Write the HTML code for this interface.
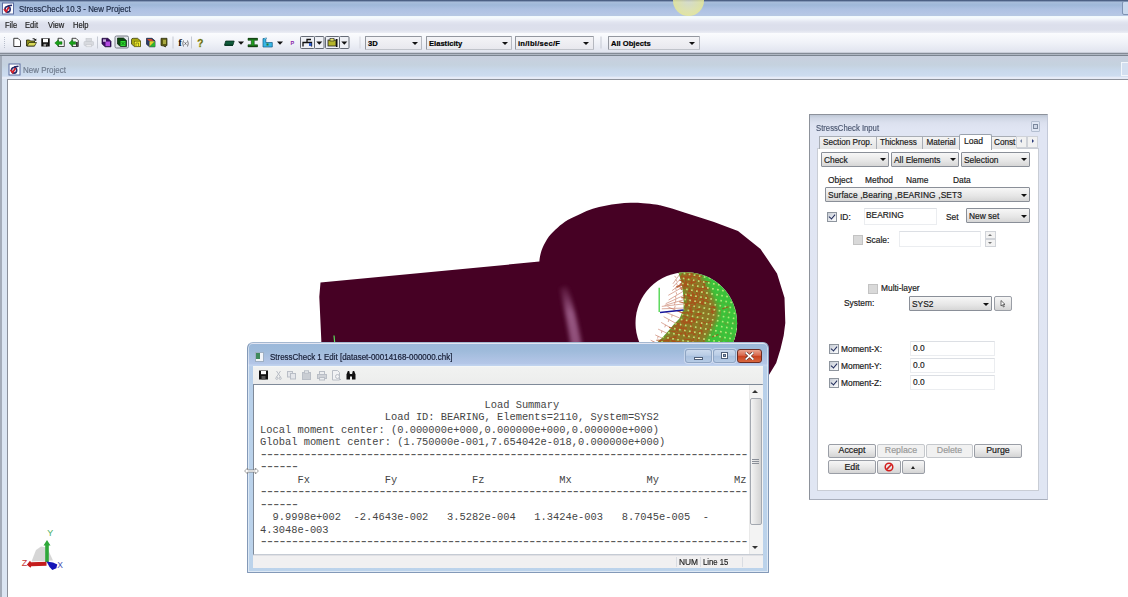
<!DOCTYPE html>
<html><head><meta charset="utf-8"><title>StressCheck 10.3 - New Project</title>
<style>
*{box-sizing:border-box;margin:0;padding:0}
html,body{width:1128px;height:597px;overflow:hidden;background:#fff}
body{position:relative;font-family:"Liberation Sans",sans-serif;font-size:8.4px;color:#1a1a1a}
.a{position:absolute}
.t{position:absolute;white-space:nowrap;line-height:10px}
.t,.cmb span,.tab span{-webkit-text-stroke:.18px}
/* main frame */
#titlebar{left:0;top:0;width:1128px;height:16px;background:linear-gradient(#3d4f72 0,#5d7297 1px,#a9bedb 2px,#9fb8d9 5px,#adc1e2 9px,#b3c5e5 13px,#b7c9e3 16px)}
#menubar{left:0;top:16px;width:1128px;height:17px;background:linear-gradient(#eef6fc 0,#f5fcfe 1px,#f1f5fb 3px,#e2e5f0 6px,#dcdfec 9px,#dde0ec 14px,#eceef5 17px)}
#toolbar{left:0;top:33px;width:1128px;height:19px;background:linear-gradient(#fbfcfe,#f0f2f8 50%,#e1e4ef)}
#mdiback{left:0;top:52px;width:1128px;height:545px;background:linear-gradient(#c8ccd8 0,#c8ccd8 1px,#848b96 1px,#848b96 2px,#b0b7c3 2px,#b0b7c3 3px,#7a838f 3px,#7a838f 4px,#a4acb9 4px)}
#mdiframe{left:2px;top:56px;width:1126px;height:541px;background:linear-gradient(#c8cfde 0,#c5d2df 9px,#c9d9ec 15px,#cddcf0 20px,#e6ebf7 21.500px,#e6ebf7 23px,#dbe5f2 23px)}
#mdicontent{left:7px;top:79px;width:1121px;height:518px;background:#fff;border-top:1px solid #8e929c;border-left:1px solid #8a8f99}
.cmb{position:absolute;border:1px solid #8a8f98;border-radius:1px;background:linear-gradient(#f7f7f7,#e6e6e6 60%,#d6d6d6);white-space:nowrap}
.cmb span{position:absolute;left:2px;top:1.500px;line-height:10px}
.cmb i{position:absolute;right:2.500px;top:50%;margin-top:-1px;width:0;height:0;border-left:3px solid transparent;border-right:3px solid transparent;border-top:3px solid #111}
.tb{font-weight:bold;font-size:7.6px;color:#000}
.cmb.tb i{right:3.500px}
.btn{font-size:8.8px;-webkit-text-stroke:.2px;position:absolute;border:1px solid #9a9ea6;border-radius:2px;background:linear-gradient(#f6f6f6,#e8e8e8 50%,#d4d4d4);text-align:center;line-height:11px}
.btn.dis{color:#9a9a9a;border-color:#c5c8cc;background:#f1f1f1}
.chk{position:absolute;width:10px;height:10px;border:1px solid #8e959e;background:linear-gradient(135deg,#c6ccd5,#f6f7f9 85%)}
.chk.dis{background:#d9d9d9;border-color:#c3c3c3}
.chk.on:after{content:"";position:absolute;left:2px;top:0px;width:3px;height:5px;border:solid #1f2a5a;border-width:0 1.7px 1.7px 0;transform:rotate(40deg)}
.inp{position:absolute;border:1px solid #ebedf0;border-top-color:#dcdfe4;background:#fff}
.mn{font-size:8.4px;color:#222;transform:scaleX(.9);transform-origin:0 0}
.sg{transform:scaleX(.93);transform-origin:0 0}
.tab{top:136px;height:13px;background:linear-gradient(#f4f4f4,#e4e4e4);border:1px solid #a8adb5;border-bottom:none}
.tab span{position:absolute;left:3px;top:1px;line-height:10px;white-space:nowrap;font-size:8.2px}
pre{font-family:"Liberation Mono",monospace}
.ml{position:absolute;left:260px;font-size:10.4px;line-height:12.42px;color:#454545;white-space:pre}
.ml.d{left:259.300px;font-size:15px;letter-spacing:-2.76px;color:#5a5a5a}
</style></head><body>

<div id="titlebar" class="a"></div>
<div id="menubar" class="a"></div>
<div id="toolbar" class="a"></div>
<div id="mdiback" class="a"></div>
<div id="mdiframe" class="a"></div>
<div id="mdicontent" class="a"></div>

<!-- title text -->
<div class="t" style="left:19px;top:4px;font-size:8.4px;color:#1c2a44;transform:scaleX(.94);transform-origin:0 0">StressCheck 10.3 - New Project</div>
<div class="t mn" style="left:4.5px;top:20px">File</div>
<div class="t mn" style="left:25px;top:20px">Edit</div>
<div class="t mn" style="left:48px;top:20px">View</div>
<div class="t mn" style="left:73px;top:20px">Help</div>
<div class="t" style="left:23.4px;top:65px;font-size:8.3px;color:#707c8e;transform:scaleX(.96);transform-origin:0 0">New Project</div>

<div class="a" style="left:673px;top:-15px;width:31px;height:31px;border-radius:50%;background:radial-gradient(circle,rgba(228,230,205,.75) 0,rgba(232,233,150,.85) 70%,rgba(236,236,120,.8) 88%,rgba(236,236,120,0) 100%)"></div>
<div class="a" style="left:1122px;top:1px;width:8px;height:14px;border:1px solid #7e93b3;border-radius:2px;background:#c9d9ee"></div>
<div class="a" style="left:1121px;top:62px;width:8px;height:14px;border:1px solid #f2f6fb;background:#d3dff0"></div>
<!--ICONS-->
<!--TOOLBAR-->
<!-- toolbar + app icons -->
<svg class="a" style="left:0;top:0" width="720" height="80" viewBox="0 0 720 80">
<defs>
</defs>
<g transform="translate(2 2.500)"><rect x="0.500" y="0.500" width="11" height="11" fill="#fdfdff" stroke="#5b6da0" stroke-width="1"/><ellipse cx="5.600" cy="6.800" rx="2.600" ry="2.800" fill="none" stroke="#222a6a" stroke-width="1.600"/><path d="M5.500 3.600 L10 2.800" stroke="#222a6a" stroke-width="1.500"/><path d="M2 6.500 L4.200 9 L7 4.500" stroke="#d31e2a" stroke-width="1.700" fill="none"/></g>
<g transform="translate(8.500 63.500)"><rect x="0.500" y="0.500" width="11" height="11" fill="#fdfdff" stroke="#5b6da0" stroke-width="1"/><ellipse cx="5.600" cy="6.800" rx="2.600" ry="2.800" fill="none" stroke="#222a6a" stroke-width="1.600"/><path d="M5.500 3.600 L10 2.800" stroke="#222a6a" stroke-width="1.500"/><path d="M2 6.500 L4.200 9 L7 4.500" stroke="#d31e2a" stroke-width="1.700" fill="none"/></g>
<!-- grip -->
<g fill="#b9bfcc"><rect x="4" y="37" width="1" height="1"/><rect x="4" y="39" width="1" height="1"/><rect x="4" y="41" width="1" height="1"/><rect x="4" y="43" width="1" height="1"/><rect x="4" y="45" width="1" height="1"/><rect x="4" y="47" width="1" height="1"/></g>
<!-- new -->
<path d="M13.800 38.300 h4.200 l2.500 2.500 v5.700 h-6.700 z" fill="#fff" stroke="#222" stroke-width="0.900"/>
<!-- open -->
<path d="M26.500 46 v-6 h3 l1 1 h4 v5 z" fill="#8e8f1e" stroke="#1f2208" stroke-width="0.800"/><path d="M27 46 l2 -3.500 h7.500 l-2 3.500 z" fill="#d9da5a" stroke="#1f2208" stroke-width="0.700"/><path d="M32 39 q2 -1.500 3.500 0.300 l0.800 -0.800 v2.300 h-2.300 l0.800 -0.800 q-1 -1 -2.800 -1 z" fill="#111"/>
<!-- save -->
<rect x="41.300" y="38.300" width="8.400" height="8.200" fill="#0c0c0c"/><rect x="43" y="38.800" width="5" height="3.500" fill="#fff"/><rect x="43.500" y="43.800" width="3.800" height="2.700" fill="#9a9a9a"/><rect x="46" y="44.300" width="1.300" height="2.200" fill="#111"/>
<!-- import -->
<path d="M58 38.300 h4 l2.300 2.300 v5.900 h-6.300 z" fill="#f4f4f4" stroke="#222" stroke-width="0.800"/><path d="M54.800 43 l3.700 -3.300 v2 h3.500 v2.600 h-3.500 v2 z" fill="#18a318" stroke="#0b5e0b" stroke-width="0.500"/>
<!-- export -->
<path d="M72 38.300 h4 l2.300 2.300 v5.900 h-6.300 z" fill="#f4f4f4" stroke="#222" stroke-width="0.800"/><path d="M69 43 l3.700 -3.300 v2 h3 v2.600 h-3 v2 z" fill="#18a318" stroke="#0b5e0b" stroke-width="0.500"/><rect x="76" y="42" width="1.800" height="4.500" fill="#333"/>
<!-- print disabled -->
<g fill="#d7d9de" stroke="#c3c6cc" stroke-width="0.600"><rect x="84" y="41.500" width="9.500" height="4" rx="0.800"/><rect x="86" y="38.500" width="5.500" height="3"/><rect x="86" y="44.500" width="5.500" height="2.300" fill="#ececef"/></g>
<rect x="97" y="36.500" width="1" height="12" fill="#c5c9d3"/>
<!-- purple -->
<path d="M102 38.300 h6 l3 3 v5.500 h-6 l-3 -3 z" fill="#3b0f63" stroke="#1a0633" stroke-width="0.700"/><rect x="105.500" y="41.500" width="4.500" height="4.500" fill="#b24be0"/><rect x="103" y="39.300" width="3" height="2.500" fill="#e7d3f5" opacity="0.800"/>
<!-- green pressed -->
<rect x="115" y="36" width="13.500" height="12" rx="1.500" fill="#e3e6ec" stroke="#6b717c" stroke-width="0.900"/>
<path d="M117.500 38 h6 l3 2.500 v6 h-6 l-3 -2.500 z" fill="#0d4a10" stroke="#062208" stroke-width="0.700"/><rect x="120.500" y="41" width="5" height="5" fill="#2edc2e"/><path d="M121.500 42 l3 3 m0 -3 l-3 3" stroke="#0d6a10" stroke-width="0.800"/>
<!-- yellow -->
<path d="M131.500 39.500 q0 -1.200 2 -1.200 h4 l3 2.500 v5.800 h-6 l-3 -2.500 z" fill="#a8a812" stroke="#2b2b05" stroke-width="0.700"/><rect x="134.300" y="41.200" width="6" height="5.300" fill="#f2ee2a" stroke="#55550a" stroke-width="0.500"/><path d="M136 46 v-3 h2.500 v3" fill="none" stroke="#55550a" stroke-width="0.600"/>
<!-- multi -->
<path d="M146.500 38.300 h5.500 l3 2.500 v6 h-5.500 l-3 -2.500 z" fill="#2a3a6a" stroke="#141b33" stroke-width="0.700"/><path d="M149.500 46.800 v-5.500 h5.500 z" fill="#e3d62a"/><path d="M149.500 46.800 h5.500 v-5.500 z" fill="#2fb52f"/><path d="M147 39 h4.500 l2 2 h-4.500 z" fill="#d44a2a"/>
<!-- olive -->
<path d="M161 38.300 h6 v7.200 l-1.500 0.300 v1.200 l-2 -1 l-2.500 -0.500 z" fill="#5e5e16" stroke="#26260a" stroke-width="0.700"/><rect x="163" y="39.800" width="3" height="4.200" fill="#a9a940"/>
<rect x="172.500" y="36.500" width="1" height="12" fill="#c5c9d3"/>
<!-- f(x) -->
<text x="178.300" y="46.300" font-family="Liberation Serif, serif" font-size="11" font-weight="bold" fill="#111">f</text><path d="M183.500 40.500 q-1.500 3 0 6 M187.500 40.500 q1.500 3 0 6" fill="none" stroke="#444" stroke-width="0.700"/><path d="M184.500 42.200 l2 2.600 m0 -2.600 l-2 2.600" stroke="#444" stroke-width="0.600"/>
<rect x="191" y="36.500" width="1" height="12" fill="#c5c9d3"/>
<!-- ? key -->
<text x="197.200" y="46.600" font-family="Liberation Sans, sans-serif" font-size="10" font-weight="bold" fill="#34380c" stroke="#b9b930" stroke-width="0.450">?</text>
<!-- green block -->
<path d="M224.500 45 l1.200 -4 h8.500 l-1.200 4 z" fill="#0f5a3a" stroke="#052a1a" stroke-width="0.700"/><path d="M224.500 45 h8.500 v1 h-8.500 z" fill="#083a25"/>
<g transform="translate(238 41.500)"><path d="M0 0 L6 0 L3 3.200 Z" fill="#111"/></g>
<!-- I beam -->
<path d="M248 38.300 h9.500 v2 h-3.300 v4.500 h3.300 v2 h-9.500 v-2 h3.300 v-4.500 h-3.300 z" fill="#1fa01f" stroke="#0b3a0b" stroke-width="0.600"/><rect x="248" y="38.200" width="9.500" height="1.300" fill="#123a12"/><rect x="248" y="45.600" width="9.500" height="1.300" fill="#123a12"/>
<!-- blue L -->
<path d="M263 47 v-8.500 h2.800 v4 h6.500 v4.500 z" fill="#39b7e6" stroke="#0e5a86" stroke-width="0.700"/><path d="M263.500 39 l1.500 -1 h2 l-1.200 1" fill="#8fe0ff" stroke="#0e5a86" stroke-width="0.400"/><rect x="266.500" y="43.500" width="2" height="2" fill="#2a7a2a"/>
<g transform="translate(277 41.500)"><path d="M0 0 L6 0 L3 3.200 Z" fill="#111"/></g>
<!-- P -->
<text x="290.600" y="45" font-family="Liberation Sans, sans-serif" font-size="5.500" font-weight="bold" fill="#8a1fa8">P</text>
<!-- boxed 1 -->
<rect x="300.500" y="36.500" width="14" height="12" rx="1" fill="#eef0f5" stroke="#555b66" stroke-width="0.900"/><rect x="314.500" y="36.500" width="9.500" height="12" rx="1" fill="#eef0f5" stroke="#555b66" stroke-width="0.900"/>
<path d="M303 46.500 v-4 h8.500 v4 M307 42.500 v-3 h4" fill="none" stroke="#111" stroke-width="1.300"/><rect x="309" y="43" width="2.500" height="3" fill="#2f5fd0"/>
<g transform="translate(316.300 41.500)"><path d="M0 0 L6 0 L3 3.200 Z" fill="#111"/></g>
<!-- boxed 2 -->
<rect x="325.500" y="36.500" width="14" height="12" rx="1" fill="#eef0f5" stroke="#555b66" stroke-width="0.900"/><rect x="339.500" y="36.500" width="9.500" height="12" rx="1" fill="#eef0f5" stroke="#555b66" stroke-width="0.900"/>
<rect x="328" y="40" width="8" height="6" fill="#b5b52a" stroke="#222" stroke-width="0.800"/><rect x="330" y="38.500" width="4" height="2.500" fill="#e8e86a" stroke="#222" stroke-width="0.600"/><rect x="336" y="39" width="1.500" height="8" fill="#111"/>
<g transform="translate(341.300 41.500)"><path d="M0 0 L6 0 L3 3.200 Z" fill="#111"/></g>
<rect x="359.500" y="36.500" width="1" height="12" fill="#d3d6de"/>
<rect x="600.500" y="36.500" width="1" height="12" fill="#c5c9d3"/>
</svg>
<div class="cmb tb" style="left:365px;top:36px;width:57px;height:13.5px;background:linear-gradient(#f4f4f7,#e8e8ee);border-color:#93979f #b5b8c0 #c0c3ca #93979f"><span>3D</span><i></i></div>
<div class="cmb tb" style="left:426px;top:36px;width:86px;height:13.5px;background:linear-gradient(#f4f4f7,#e8e8ee);border-color:#93979f #b5b8c0 #c0c3ca #93979f"><span>Elasticity</span><i></i></div>
<div class="cmb tb" style="left:515px;top:36px;width:78.5px;height:13.5px;background:linear-gradient(#f4f4f7,#e8e8ee);border-color:#93979f #b5b8c0 #c0c3ca #93979f"><span style="letter-spacing:.25px">in/lbl/sec/F</span><i></i></div>
<div class="cmb tb" style="left:608px;top:36px;width:91.5px;height:13.5px;background:linear-gradient(#f4f4f7,#e8e8ee);border-color:#93979f #b5b8c0 #c0c3ca #93979f"><span>All Objects</span><i></i></div>
<!--/TOOLBAR-->
<!--MODEL-->
<!-- 3D model -->
<svg class="a" style="left:0;top:80px" width="1128" height="517" viewBox="0 80 1128 517">
<defs>
<linearGradient id="hl" x1="0" y1="0" x2="1" y2="0"><stop offset="0" stop-color="#4a0630" stop-opacity="0"/><stop offset="0.5" stop-color="#946080" stop-opacity="1"/><stop offset="1" stop-color="#4a0630" stop-opacity="0"/></linearGradient>
<linearGradient id="hlv" x1="0" y1="0" x2="0" y2="1"><stop offset="0" stop-color="#a0608c" stop-opacity="0.15"/><stop offset="0.45" stop-color="#a0608c" stop-opacity="1"/><stop offset="1" stop-color="#a0608c" stop-opacity="0.9"/></linearGradient>
<clipPath id="holeclip"><circle cx="686.300" cy="323" r="50.800"/></clipPath>
<filter id="b2" x="-20%" y="-20%" width="140%" height="140%"><feGaussianBlur stdDeviation="2"/></filter>
<filter id="b1" x="-50%" y="-20%" width="200%" height="140%"><feGaussianBlur stdDeviation="2.300"/></filter>
<pattern id="dots" x="0" y="0" width="5.100" height="5.100" patternUnits="userSpaceOnUse" patternTransform="rotate(10)"><circle cx="2.500" cy="2.500" r="0.900" fill="#c9f283"/></pattern>
</defs>
<path d="M320.500 282.500 L539.400 261.600 C539.5 260.8 539.5 258.9 540.0 256.6 C540.5 254.3 541.1 251.2 542.6 247.8 C544.1 244.5 546.4 239.8 548.9 236.5 C551.4 233.2 554.5 230.4 557.6 227.7 C560.7 225.0 563.9 222.4 567.7 220.1 C571.5 217.8 576.1 215.8 580.3 213.9 C584.5 212.0 588.6 210.2 592.8 208.8 C597.0 207.4 601.2 206.5 605.4 205.7 C609.6 204.9 613.8 204.3 618.0 203.8 C622.2 203.3 626.3 202.9 630.5 202.8 C634.7 202.7 638.9 202.9 643.1 203.2 C647.3 203.5 652.9 204.1 655.7 204.4 C658.5 204.8 659.3 205.2 660.0 205.3 L672.0 208.5 L685.0 212.8 L700.0 217.5 L714.0 222.0 L738.0 231.0 L760.5 249.0 L768.0 260.0 L777.0 273.6 L784.5 297.7 L785.3 323.0 L783.7 335.4 L780.5 349.0 L776.2 363.0 L768.6 375.5 L768 400 L321.800 400 L321.300 340 L319.300 296.800 Z" fill="#460124"/>
<path d="M560 288 Q565 310 571 346 L582 346 Q575 308 567 286 Z" fill="url(#hlv)" filter="url(#b1)" opacity="0.9"/>
<!-- hole -->
<circle cx="686.3" cy="323.0" r="50.8" fill="#fff"/>
<g clip-path="url(#holeclip)">
<path d="M678.2 272.0 L681.6 282.4 L682.9 291.8 L683.8 302.0 L683.6 309.2 L679.6 318.6 L674.2 324.0 L668.8 330.6 L662.0 338.0 L656.8 342.7 L650.0 349.0 L760 349 L760 262 L678 262 Z" fill="#3cc23a"/>
<clipPath id="greenclip"><path d="M678.2 272.0 L681.6 282.4 L682.9 291.8 L683.8 302.0 L683.6 309.2 L679.6 318.6 L674.2 324.0 L668.8 330.6 L662.0 338.0 L656.8 342.7 L650.0 349.0 L760 349 L760 262 L678 262 Z"/></clipPath>
<g clip-path="url(#greenclip)"><path d="M678.2 272.0 L681.6 282.4 L682.9 291.8 L683.8 302.0 L683.6 309.2 L679.6 318.6 L674.2 324.0 L668.8 330.6 L662.0 338.0 L656.8 342.7 L650.0 349.0 L700.0 349.0 L704.3 342.7 L707.7 338.0 L711.6 330.6 L714.5 324.0 L717.8 318.6 L718.1 309.2 L715.5 302.0 L710.6 291.8 L705.7 282.4 L698.2 272.0 Z" fill="#b4561e" opacity="0.68" filter="url(#b2)"/></g>
<path d="M687.4 296.3 l6.0 -2.8 M683.9 288.1 l-3.1 1.6 M702.8 288.7 l5.2 0.4 M689.6 282.0 l5.3 0.4 M689.8 319.9 l-4.8 1.7 M692.3 330.3 l3.3 -0.5 M691.7 294.5 l-4.2 2.1 M675.0 328.8 l-6.0 -1.4 M675.2 333.4 l6.8 -0.0 M690.7 307.6 l-0.6 4.1 M689.5 300.9 l3.9 -0.1 M696.9 293.6 l0.4 5.2 M703.3 338.3 l1.3 6.7 M683.9 283.3 l0.4 4.1 M693.1 282.9 l-5.3 -1.8 M692.6 327.5 l-0.8 4.5 M685.4 279.8 l2.5 4.8 M691.3 279.7 l4.9 2.4 M685.5 283.1 l2.8 4.1 M687.5 295.4 l-3.1 -0.5 M666.1 343.3 l-6.5 0.1 M680.5 324.2 l-4.3 0.0 M709.6 288.7 l-6.0 -1.7 M695.0 287.0 l5.1 2.7 M681.0 343.7 l3.0 1.6 M692.1 307.3 l-3.8 2.2 M690.0 320.2 l4.7 -0.5 M682.5 319.7 l5.8 1.3 M683.2 284.8 l-6.4 2.7 M687.9 321.3 l-3.1 -1.4 M678.0 328.2 l4.0 -1.3 M690.9 290.0 l3.7 5.5 M701.1 321.7 l4.8 1.6 M682.7 273.4 l-1.9 5.1 M682.5 281.0 l-3.1 -0.8 M682.5 286.3 l4.8 -0.2 M694.5 317.9 l0.7 5.0 M699.1 290.6 l5.8 2.6 M683.6 282.3 l-3.8 1.9 M703.6 281.2 l6.8 1.0 M699.1 288.5 l5.8 -0.1 M665.8 346.6 l3.1 4.2 M684.1 305.0 l6.8 0.9 M682.6 279.9 l2.4 5.9 M700.2 322.7 l0.2 3.4 M690.0 276.3 l-1.7 2.9 M667.0 336.2 l1.6 5.2 M697.8 275.2 l2.2 5.1 M687.6 311.8 l1.2 2.9 M691.9 273.4 l-6.2 0.6 M701.4 304.4 l4.3 -0.5 M692.9 334.4 l3.0 -0.3 M702.3 318.9 l-5.6 0.9 M686.8 293.1 l2.3 3.8 M700.3 296.7 l2.7 -1.3 M694.9 300.6 l0.4 6.3 M691.0 282.8 l-5.8 2.8 M705.0 283.6 l-1.1 3.4 M680.1 326.3 l-5.8 -0.5 M715.2 309.9 l-4.6 2.7 M690.5 339.0 l4.5 5.1 M687.9 300.2 l0.1 3.0 M692.0 331.8 l-4.4 2.2 M684.7 332.7 l2.2 4.5 M697.8 300.7 l5.2 1.4 M701.8 296.9 l2.2 3.4 M701.2 322.4 l0.3 6.1 M667.7 346.5 l5.7 -2.5 M665.9 344.6 l-3.2 1.1 M677.5 328.1 l5.8 0.6 M700.6 289.4 l3.2 3.3 M682.9 326.5 l1.9 6.1 M702.7 281.0 l1.6 4.3 M666.8 337.2 l6.1 1.6 M696.5 293.4 l0.3 6.1 M684.7 304.1 l5.8 -0.6 M690.8 275.7 l6.4 1.7 M686.0 313.3 l-4.0 -0.8 M686.5 321.2 l5.0 -0.5 M683.6 332.9 l-3.7 0.4 M683.1 278.8 l5.8 -1.5 M694.1 303.0 l1.6 5.1 M700.1 299.0 l4.3 1.3 M687.2 320.4 l-3.2 4.9 M678.9 339.2 l-6.0 -2.4 M658.7 344.9 l-5.7 -0.8 M677.7 335.5 l-6.1 2.7 M682.3 320.4 l3.3 -0.8 M695.3 294.5 l-3.6 2.2 M712.6 306.6 l2.9 1.2 M690.2 302.9 l3.8 -1.2 M693.6 322.1 l-4.6 0.6 M685.1 272.5 l3.6 -1.6 M693.7 288.6 l4.4 2.2 M661.7 340.3 l-3.1 1.8 M680.3 275.9 l6.2 2.6 M689.9 296.7 l4.2 4.8 M661.1 345.9 l4.8 -2.1 M686.5 328.9 l-4.4 2.1 M696.4 300.0 l-1.9 3.5 M689.0 318.9 l6.0 -0.2 M668.6 339.4 l-5.5 1.6 M671.8 341.3 l3.1 0.3 M698.3 289.5 l1.4 6.1 M684.6 282.0 l4.9 2.3 M689.2 296.6 l3.8 1.1 M680.4 276.9 l4.0 -0.7 M681.9 278.3 l0.7 4.8 M669.6 338.8 l-1.2 4.0 M694.9 314.5 l3.9 -1.2 M662.5 340.1 l-6.2 0.1 M690.9 321.0 l-1.2 2.9 M684.6 294.0 l-0.2 5.0 M697.9 285.3 l-5.5 -0.5 M686.3 288.3 l-6.6 -0.4 M690.1 333.1 l6.1 -0.8 M682.7 313.1 l5.6 -0.6 M694.5 301.8 l-4.6 2.5 M697.8 298.8 l-4.3 1.6 M665.2 342.6 l2.9 3.9 M682.1 284.2 l-6.0 2.9 M675.8 327.3 l2.5 4.3 M685.9 332.4 l-2.2 3.6 M688.1 317.6 l-5.8 -2.1 M694.5 288.7 l3.3 5.9 M685.4 283.7 l-6.0 2.2 M691.0 322.4 l0.7 5.5 M687.9 295.1 l5.4 -0.7 M691.8 308.7 l0.6 4.6 M684.9 277.0 l5.3 1.7 M697.6 278.2 l3.6 4.3 M668.9 330.8 l6.9 0.8 M722.2 308.9 l6.0 -2.1 M685.4 317.8 l-2.4 4.4 M663.7 341.0 l4.6 0.0 M684.7 319.7 l-3.1 0.9 M694.0 336.4 l-1.3 6.8 M694.9 319.2 l-2.5 3.5 M684.8 278.1 l1.9 5.2 M679.4 345.8 l4.1 -0.8 M689.1 318.9 l2.8 -1.3 M680.9 272.2 l-3.5 -0.1 M694.1 299.5 l-1.2 3.2 M713.1 319.9 l-5.4 3.2 M683.5 339.0 l6.6 0.7 M687.0 275.3 l5.3 -1.4 M682.1 321.3 l-0.8 6.2 M686.3 285.1 l-5.0 -1.2 M699.5 300.1 l3.7 -1.6 M683.4 320.3 l3.7 1.7 M698.2 313.5 l3.3 0.1 M690.1 310.1 l1.8 3.3 M695.7 301.2 l-4.4 -2.1 M699.0 335.0 l-1.5 6.0 M698.9 301.4 l-6.1 2.8 M684.6 297.9 l-3.3 -0.3 M698.5 275.5 l-3.3 0.0 M712.1 337.1 l6.3 -2.6 M671.2 340.3 l3.3 0.8 M675.2 328.8 l2.2 2.4 M709.2 329.0 l-3.0 0.8 M698.2 303.0 l5.8 -0.9 M679.2 334.1 l3.0 -0.2 M701.4 308.8 l-4.0 0.8 M662.9 342.8 l-5.5 2.5 M711.4 308.8 l2.0 6.2 M686.8 327.9 l-5.0 0.6 M697.1 300.4 l-5.5 -1.2 M687.5 298.1 l4.6 1.6 M679.5 323.7 l-3.7 -0.6 M705.6 294.6 l2.8 4.6 M692.2 298.1 l6.7 -1.6 M691.9 279.6 l3.3 1.0 M674.2 340.4 l3.9 4.2 M699.2 309.5 l-3.9 0.5 M690.1 336.0 l-6.5 -0.8 M702.1 330.1 l-0.5 4.0 M691.6 324.5 l-1.1 4.8 M692.8 273.5 l-2.7 5.5 M702.7 301.2 l4.5 -2.3 M691.4 279.6 l0.3 5.1 M697.9 302.8 l5.8 1.1 M692.0 318.1 l3.5 4.3 M683.9 322.6 l6.8 -1.4 M664.5 344.1 l4.4 2.0 M691.5 314.2 l-0.6 4.8 M689.1 294.1 l1.6 5.6 M711.2 323.6 l-1.4 3.7 M692.7 294.6 l-1.0 6.3 M701.0 276.3 l-5.1 -1.5 M679.6 321.3 l3.7 -0.8 M695.7 305.9 l-5.4 -0.4 M701.5 330.6 l-3.6 1.3 M697.9 277.9 l4.5 -1.8 M702.0 313.8 l-6.0 2.4 M691.0 272.5 l-0.8 4.6 M666.4 347.0 l5.7 -0.8 M676.8 341.9 l3.9 0.0 M685.2 303.2 l-5.9 -1.4 M690.2 287.8 l-1.7 4.3 M690.5 309.8 l-0.5 3.7 M679.3 325.5 l-6.5 0.9 M683.0 312.9 l-5.6 -2.2 M688.6 276.5 l-5.3 -0.7 M682.9 323.1 l6.5 -0.3 M687.6 303.6 l-2.3 4.7 M688.5 291.4 l4.9 -0.9 M712.7 311.2 l3.0 -0.2 M706.0 301.0 l3.0 1.5 M710.4 307.4 l3.9 -0.3" stroke="#ae4a18" stroke-width="1.100" fill="none" opacity="0.8"/>
<path d="M719.2 292.5 l-0.6 3.7 M727.3 312.9 l2.7 -1.5 M725.8 331.3 l2.6 3.4 M721.7 303.2 l-4.0 0.1 M732.4 340.2 l2.0 0.7 M731.5 288.8 l-1.5 -3.5 M714.4 309.1 l-3.9 -2.9 M723.3 336.8 l-2.0 4.4 M719.1 330.1 l2.5 4.2 M733.6 292.2 l2.3 3.8 M728.3 314.6 l-2.7 0.8 M715.0 331.8 l-0.7 3.8 M729.1 325.4 l-3.7 -2.7 M705.5 330.0 l2.6 3.7 M734.3 321.2 l0.1 3.2 M728.1 308.3 l0.3 3.3 M714.6 327.7 l-0.3 2.5 M727.9 342.1 l0.6 -2.8 M731.7 293.7 l2.4 -0.1 M728.9 345.5 l-4.1 -1.3 M721.0 316.0 l-3.3 -0.9 M728.6 308.7 l-0.9 -4.9 M706.7 304.2 l-3.3 2.5 M722.6 342.4 l3.1 0.2 M721.1 318.5 l-1.3 1.7 M720.6 309.7 l-0.3 4.5 M720.2 304.9 l0.8 2.5 M729.2 290.7 l-0.9 3.6 M728.4 307.3 l1.7 -2.1 M719.8 342.2 l2.1 -2.3 M707.5 313.7 l-0.8 1.9 M723.2 302.4 l2.2 1.5 M722.0 339.0 l-2.3 -1.4 M713.4 342.4 l2.7 1.9 M723.3 321.8 l3.1 3.3 M734.8 306.0 l-1.5 1.4 M716.1 287.2 l-1.0 -3.3 M731.8 337.4 l2.5 -3.0 M726.2 342.2 l2.5 1.6 M707.7 299.5 l3.1 -1.7" stroke="#9a7a2a" stroke-width="0.800" fill="none" opacity="0.5"/>
<path d="M678.2 272.0 L681.6 282.4 L682.9 291.8 L683.8 302.0 L683.6 309.2 L679.6 318.6 L674.2 324.0 L668.8 330.6 L662.0 338.0 L656.8 342.7 L650.0 349.0 L760 349 L760 262 L678 262 Z" fill="url(#dots)"/>
<path d="M679.9 274.0 l-7.0 9.8 M676.1 277.9 l-1.5 -2.0 M681.2 278.2 l-8.1 8.6 M677.0 281.7 l-1.2 -2.2 M682.6 282.5 l-10.5 8.1 M677.4 285.7 l-0.8 -2.4 M683.2 286.8 l-14.9 8.5 M676.2 290.2 l-0.5 -2.5 M683.8 291.0 l-15.2 9.0 M676.7 294.6 l-0.5 -2.4 M684.2 295.2 l-18.5 8.5 M675.8 298.6 l-0.2 -2.5 M684.6 299.5 l-19.9 5.9 M675.6 301.9 l0.1 -2.5 M684.8 303.8 l-23.0 2.6 M674.5 304.8 l0.5 -2.4 M684.6 308.0 l-22.8 0.8 M674.5 308.3 l0.7 -2.4 M683.0 313.5 l-15.5 -6.9 M674.2 309.5 l-0.5 2.5 M680.9 318.5 l-15.4 -6.3 M672.1 314.9 l-0.4 2.5 M676.2 323.5 l-12.5 -6.8 M668.9 319.6 l-0.7 2.4 M671.9 328.5 l-10.8 -6.1 M665.5 324.9 l-0.7 2.4 M667.6 333.5 l-9.5 -4.4 M661.9 330.8 l-0.5 2.4 M663.0 338.5 l-7.8 -3.6 M658.1 336.2 l-0.5 2.4 M657.5 343.5 l-6.8 -3.3 M653.1 341.3 l-0.6 2.4" stroke="#b5553a" stroke-width="0.800" fill="none" opacity="0.62"/>
</g>
<path d="M659.200 287.800 L659.200 312" stroke="#45d445" stroke-width="1.300"/>
<path d="M660 312.500 L683.600 309.900" stroke="#16169c" stroke-width="1.500"/>
<path d="M334 335.500 L334.700 343" stroke="#5be05b" stroke-width="1.200"/>
<!-- axis triad -->
<g>
<path d="M31.500 561.500 L36 550 L41 546.500 L47 547.500 L53 560.500 Z" fill="#d2d2d2" opacity="0.9"/>
<path d="M45.200 562 L45.200 545.500 L43.500 545.500 L47 540 L50.500 545.500 L48.800 545.500 L48.800 562 Z" fill="#2fa83a"/>
<path d="M46.500 561.800 L31 562.300 L30 560.800 L26.800 564.800 L30.500 567.800 L31.200 566.300 L46.500 565.800 Z" fill="#c41c1c"/>
<path d="M46.500 561.500 L53 562.500 L57.300 564.500 L56.300 568.300 L52.300 570 L49.500 567 Z" fill="#1414b8"/>
<text x="47.300" y="535.500" font-size="9" fill="#4cae62" font-family="Liberation Sans, sans-serif">Y</text>
<text x="21.800" y="566" font-size="9" fill="#c83a3a" font-family="Liberation Sans, sans-serif">Z</text>
<text x="57.200" y="568" font-size="8.500" fill="#4650b4" font-family="Liberation Sans, sans-serif">X</text>
</g>
</svg>
<!--/MODEL-->
<!--PANEL-->
<!-- StressCheck Input panel -->
<div class="a" style="left:809px;top:114px;width:239px;height:386px;background:linear-gradient(#bec7d5 0,#cfd6e4 3px,#dce1ef 8px,#e0e5f3 14px,#e0e6f3);border:1px solid #8d929b;border-right-color:#c3c9d8;border-bottom-color:#a9afbc"></div>
<div class="t sg" style="left:815.500px;top:122.500px;color:#4d5972;font-size:8.3px">StressCheck Input</div>
<div class="a" style="left:1030.500px;top:120.500px;width:9.500px;height:11px;border:1px solid #b3bed0;border-radius:1px;background:#dfe6f3"></div>
<div class="a" style="left:1033px;top:124px;width:5px;height:5px;border:1px solid #7a879c;background:#cfd8e8"></div>
<!-- pane -->
<div class="a" style="left:817px;top:148px;width:221.500px;height:343px;background:#fff;border:1px solid #c9cdd5"></div>
<!-- tabs -->
<div class="a tab" style="left:819px;width:58px"><span>Section Prop.</span></div>
<div class="a tab" style="left:876px;width:47px"><span>Thickness</span></div>
<div class="a tab" style="left:922px;width:38px"><span style="left:3.500px">Material</span></div>
<div class="a tab" style="left:990px;width:27px;border-right:none"><span>Const</span></div>
<div class="a" style="left:959px;top:134px;width:33px;height:16px;background:#fff;border:1px solid #9aa2ad;border-bottom:none;border-radius:2px 2px 0 0"></div>
<div class="t" style="left:964px;top:136px;font-size:8.6px">Load</div>
<div class="a" style="left:1016px;top:136px;width:11px;height:12px;background:#f1f1f1;border:1px solid #cfd2d8"></div>
<div class="a" style="left:1027px;top:136px;width:11px;height:12px;background:#f1f1f1;border:1px solid #cfd2d8"></div>
<div class="a" style="left:1020px;top:139px;border-top:2px solid transparent;border-bottom:2px solid transparent;border-right:2.500px solid #7b88a8"></div>
<div class="a" style="left:1031.500px;top:139px;border-top:2px solid transparent;border-bottom:2px solid transparent;border-left:2.500px solid #2a3a7a"></div>
<!-- combo row -->
<div class="cmb" style="left:821px;top:152px;width:68px;height:14.500px"><span>Check</span><i></i></div>
<div class="cmb" style="left:891px;top:152px;width:68px;height:14.500px"><span>All Elements</span><i></i></div>
<div class="cmb" style="left:961px;top:152px;width:69px;height:14.500px"><span>Selection</span><i></i></div>
<div class="t" style="left:828px;top:175px">Object</div>
<div class="t" style="left:865px;top:175px">Method</div>
<div class="t" style="left:906px;top:175px">Name</div>
<div class="t" style="left:953px;top:175px">Data</div>
<div class="cmb" style="left:825px;top:187px;width:205px;height:15px"><span style="top:2px;left:2px;letter-spacing:.12px">Surface ,Bearing ,BEARING ,SET3</span><i></i></div>
<!-- ID row -->
<div class="chk on" style="left:827px;top:212px"></div>
<div class="t" style="left:840px;top:212px">ID:</div>
<div class="inp" style="left:864px;top:208px;width:73px;height:17px"></div>
<div class="t" style="left:866px;top:210px">BEARING</div>
<div class="t" style="left:946px;top:212px">Set</div>
<div class="cmb" style="left:966px;top:208px;width:64px;height:15px"><span style="top:2px">New set</span><i></i></div>
<!-- scale -->
<div class="chk dis" style="left:853px;top:235px"></div>
<div class="t" style="left:866px;top:235px">Scale:</div>
<div class="inp" style="left:899px;top:231px;width:82px;height:16px"></div>
<div class="a" style="left:985px;top:231px;width:11px;height:8px;border:1px solid #d0d3d8;background:#f3f3f3"></div>
<div class="a" style="left:985px;top:239px;width:11px;height:8px;border:1px solid #d0d3d8;background:#f3f3f3"></div>
<div class="a" style="left:988px;top:234px;border-left:2px solid transparent;border-right:2px solid transparent;border-bottom:2px solid #777"></div>
<div class="a" style="left:988px;top:242px;border-left:2px solid transparent;border-right:2px solid transparent;border-top:2px solid #777"></div>
<!-- multilayer -->
<div class="chk dis" style="left:868px;top:284px"></div>
<div class="t" style="left:881px;top:283px">Multi-layer</div>
<div class="t" style="left:844px;top:298px">System:</div>
<div class="cmb" style="left:909px;top:296px;width:83px;height:15px"><span style="top:2px">SYS2</span><i></i></div>
<div class="btn" style="left:994px;top:296px;width:18px;height:15px"></div>
<svg class="a" style="left:1000px;top:300px" width="6" height="8" viewBox="0 0 6 8"><path d="M1 0.5 L1 6 L2.4 4.8 L3.4 7 L4.3 6.6 L3.3 4.5 L5 4.4 Z" fill="#fff" stroke="#333" stroke-width="0.7"/></svg>
<!-- moments -->
<div class="chk on" style="left:829px;top:344px"></div>
<div class="t" style="left:841px;top:344px">Moment-X:</div>
<div class="inp" style="left:910px;top:341px;width:85px;height:15px"></div>
<div class="t" style="left:913px;top:343px">0.0</div>
<div class="chk on" style="left:829px;top:361px"></div>
<div class="t" style="left:841px;top:361px">Moment-Y:</div>
<div class="inp" style="left:910px;top:358px;width:85px;height:15px"></div>
<div class="t" style="left:913px;top:360px">0.0</div>
<div class="chk on" style="left:829px;top:378px"></div>
<div class="t" style="left:841px;top:378px">Moment-Z:</div>
<div class="inp" style="left:910px;top:375px;width:85px;height:15px"></div>
<div class="t" style="left:913px;top:377px">0.0</div>
<!-- buttons -->
<div class="btn" style="left:828px;top:444px;width:48px;height:13.500px">Accept</div>
<div class="btn dis" style="left:877px;top:444px;width:48px;height:13.500px">Replace</div>
<div class="btn dis" style="left:926px;top:444px;width:47px;height:13.500px">Delete</div>
<div class="btn" style="left:974px;top:444px;width:48px;height:13.500px">Purge</div>
<div class="btn" style="left:828px;top:460px;width:48px;height:14px;line-height:12.500px">Edit</div>
<div class="btn" style="left:877px;top:460px;width:24px;height:14px"></div>
<svg class="a" style="left:884px;top:462px" width="10" height="10" viewBox="0 0 10 10"><circle cx="5" cy="5" r="3.8" fill="none" stroke="#d21f1f" stroke-width="1.5"/><path d="M2.4 7.6 L7.6 2.4" stroke="#d21f1f" stroke-width="1.5"/></svg>
<div class="btn" style="left:902px;top:460px;width:23px;height:14px"></div>
<div class="a" style="left:911px;top:466px;border-left:2.5px solid transparent;border-right:2.5px solid transparent;border-bottom:3px solid #222"></div>
<!--/PANEL-->
<!--EDITWIN-->
<!-- Edit window -->
<div class="a" style="left:247px;top:342px;width:522px;height:231px;border:1px solid #8399b8;border-top-color:#a5b8d0;border-radius:6px 6px 1px 1px;background:linear-gradient(#d9d3ea 0,#9cb9da 1.500px,#9fbbdb 8px,#adc2e3 16px,#b5c7e8 21px,#c3d5f0 22px,#b7cee9 24px,#b9d1ea 60px,#bcd3eb);box-shadow:0 0 0 1px rgba(255,255,255,.5) inset"></div>
<!-- window icon -->
<div class="a" style="left:255px;top:352px;width:9px;height:10px;background:#f2f5f9;border:1px solid #9fb0c4"></div>
<div class="a" style="left:256px;top:353px;width:4px;height:6px;background:#3f8a5c"></div>
<div class="t" style="left:269.500px;top:352px;font-size:8.3px;color:#141c33;transform:scaleX(.96);transform-origin:0 0">StressCheck 1 Edit [dataset-00014168-000000.chk]</div>
<!-- caption buttons -->
<div class="a" style="left:685px;top:349px;width:27px;height:14px;border:1px solid #8fa5c3;border-radius:3px;background:linear-gradient(#cbdaed,#b9cce5 45%,#a9c0de 50%,#b6cbe5);box-shadow:0 0 0 1px rgba(255,255,255,.35)"></div>
<div class="a" style="left:694px;top:357px;width:9px;height:3px;background:#fff;border:1px solid #4f5f78"></div>
<div class="a" style="left:713px;top:349px;width:23px;height:14px;border:1px solid #8fa5c3;border-radius:3px;background:linear-gradient(#cbdaed,#b9cce5 45%,#a9c0de 50%,#b6cbe5);box-shadow:0 0 0 1px rgba(255,255,255,.35)"></div>
<div class="a" style="left:721px;top:352px;width:7px;height:7px;background:#fff;border:1px solid #4f5f78"></div>
<div class="a" style="left:723px;top:354px;width:3px;height:3px;background:#8ea5c4;border:1px solid #4f5f78"></div>
<div class="a" style="left:737px;top:349px;width:25px;height:14px;border:1px solid #6b2b22;border-radius:3px;background:linear-gradient(#e9a38f,#d9694e 45%,#c8401f 50%,#d8673f)"></div>
<svg class="a" style="left:745px;top:352px" width="9" height="8" viewBox="0 0 9 8"><path d="M1.2 1 L7.8 7 M7.8 1 L1.2 7" stroke="#5a2a22" stroke-width="3" stroke-linecap="square"/><path d="M1.2 1 L7.8 7 M7.8 1 L1.2 7" stroke="#fff" stroke-width="1.7" stroke-linecap="square"/></svg>
<!-- toolbar strip -->
<div class="a" style="left:253px;top:366px;width:510px;height:18px;background:linear-gradient(#f1f2f1,#eeefee 60%,#ececec);border-top:1px solid #f4f6f6"></div>
<!-- tb icons -->
<svg class="a" style="left:258px;top:369px" width="100" height="12" viewBox="0 0 100 12">
<rect x="1" y="1.5" width="9" height="9" fill="#111"/><rect x="3" y="2" width="5" height="3.2" fill="#fff"/><rect x="3.5" y="7" width="4" height="3.5" fill="#555"/>
<g stroke="#b9bec6" fill="none" stroke-width="1"><path d="M18.500 2 L22.500 8 M22.500 2 L18.500 8"/><circle cx="18.800" cy="9.300" r="1.100"/><circle cx="22.200" cy="9.300" r="1.100"/>
<rect x="29.5" y="2.5" width="5" height="5.5" fill="#e4e6ea"/><rect x="32.5" y="4.5" width="5" height="5.5" fill="#e4e6ea"/>
<rect x="44.500" y="3.5" width="8" height="7" fill="#c9cdd3"/><rect x="46.500" y="1.8" width="4" height="2.400" fill="#e9ebee"/>
<rect x="59.5" y="5.5" width="9" height="4" fill="#cfd2d7"/><rect x="61.500" y="2.500" width="5" height="3" fill="#eceef0"/><rect x="61.5" y="8.5" width="5" height="2.5" fill="#eceef0"/>
<path d="M74.500 1.500 h5 l2 2 v7.500 h-7 z" fill="#f1f2f4"/><circle cx="79.5" cy="7.500" r="2"/><path d="M81 9 l2 2"/></g>
<g fill="#111"><path d="M88.500 10.500 v-5 l1.300 -3.500 h1.400 l0.800 3.500 v5 z"/><path d="M94 10.500 v-5 l0.800 -3.500 h1.400 l1.300 3.500 v5 z"/><rect x="91.500" y="5" width="3" height="2.500"/></g>
</svg>
<!-- text area -->
<div class="a" style="left:253px;top:384px;width:510px;height:171px;background:#fff;border:1px solid #7f8a99;border-right-color:#aeb6c2;border-bottom-color:#c5cbd4"></div>
<pre class="ml" style="top:398.52px">                                    Load Summary</pre>
<pre class="ml" style="top:411.02px">                    Load ID: BEARING, Elements=2110, System=SYS2</pre>
<pre class="ml" style="top:423.52px">Local moment center: (0.000000e+000,0.000000e+000,0.000000e+000)</pre>
<pre class="ml" style="top:436.02px">Global moment center: (1.750000e-001,7.654042e-018,0.000000e+000)</pre>
<pre class="ml d" style="top:449.88px">------------------------------------------------------------------------------</pre>
<pre class="ml d" style="top:462.38px">------</pre>
<pre class="ml" style="top:473.52px">      Fx            Fy            Fz            Mx            My            Mz</pre>
<pre class="ml d" style="top:487.38px">------------------------------------------------------------------------------</pre>
<pre class="ml d" style="top:499.88px">------</pre>
<pre class="ml" style="top:511.02px">  9.9998e+002  -2.4643e-002   3.5282e-004   1.3424e-003   8.7045e-005  -</pre>
<pre class="ml" style="top:523.52px">4.3048e-003</pre>
<pre class="ml d" style="top:537.38px">------------------------------------------------------------------------------</pre>
<!-- scrollbar -->
<div class="a" style="left:749px;top:385px;width:13.500px;height:169px;background:#f3f3f3;border-left:1px solid #e9e9e9"></div>
<div class="a" style="left:749.500px;top:398px;width:12px;height:127px;border:1px solid #a3a8b0;border-radius:2px;background:linear-gradient(90deg,#f4f4f4,#e3e3e3 50%,#d3d3d3)"></div>
<div class="a" style="left:752px;top:459px;width:6.500px;height:1px;background:#8a8f98;box-shadow:0 2px 0 #8a8f98,0 4px 0 #8a8f98"></div>
<div class="a" style="left:752px;top:390px;border-left:3px solid transparent;border-right:3px solid transparent;border-bottom:3px solid #333"></div>
<div class="a" style="left:752px;top:546px;border-left:3px solid transparent;border-right:3px solid transparent;border-top:3px solid #333"></div>
<!-- status bar -->
<div class="a" style="left:253px;top:555px;width:510px;height:13px;background:#f1f0f1;border-top:1px solid #e0e0e4"></div>
<div class="a" style="left:676px;top:557px;width:1px;height:10px;background:#d9dce2"></div>
<div class="a" style="left:700px;top:557px;width:1px;height:10px;background:#d9dce2"></div>
<div class="a" style="left:742px;top:557px;width:1px;height:10px;background:#d9dce2"></div>
<div class="t sg" style="left:679px;top:557px;font-size:9px;color:#222">NUM</div>
<div class="t sg" style="left:703px;top:557px;font-size:8.3px;color:#222">Line 15</div>
<!-- resize cursor -->
<svg class="a" style="left:244px;top:466.500px" width="15" height="8" viewBox="0 0 15 8"><path d="M0.600 4 L3.600 1 L3.600 2.900 L11.400 2.900 L11.400 1 L14.400 4 L11.400 7 L11.400 5.100 L3.600 5.100 L3.600 7 Z" fill="#fff" stroke="#777" stroke-width="0.700"/></svg>
<!--/EDITWIN-->
</body></html>
